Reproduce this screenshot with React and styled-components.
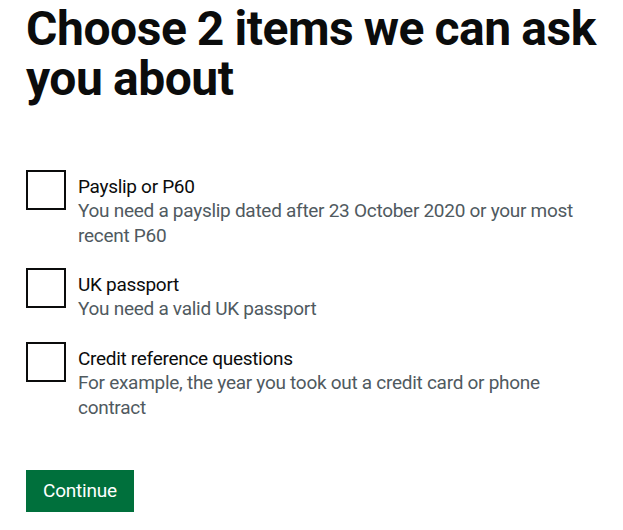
import React from "react";
import styled, { createGlobalStyle } from "styled-components";

const Global = createGlobalStyle`
  html, body { margin: 0; padding: 0; background: #ffffff; }
  body { font-family: Roboto, "Liberation Sans", Arial, sans-serif; color: #0b0c0c; }
  * { box-sizing: border-box; }
`;

const Page = styled.main`
  padding: 4px 10px 0 26px;
`;

const Fieldset = styled.fieldset`
  margin: 0;
  padding: 0;
  border: 0;
  min-width: 0;
`;

const Legend = styled.legend`
  padding: 0;
  margin: 0 0 66px 0;
`;

const Heading = styled.h1`
  margin: 0;
  font-family: Roboto, "Liberation Sans", Arial, sans-serif;
  font-weight: 700;
  font-size: 48px;
  line-height: 50px;
  letter-spacing: -0.45px;
  word-spacing: -1px;
  color: #0b0c0c;
`;

const Checkboxes = styled.div`
  display: flex;
  flex-direction: column;
`;

const Item = styled.div`
  display: grid;
  grid-template-columns: 40px 1fr;
  column-gap: 12px;
  min-height: 40px;
  margin-bottom: ${(p) => p.$gap}px;
`;

const Box = styled.input.attrs({ type: "checkbox" })`
  appearance: none;
  margin: 0;
  width: 40px;
  height: 40px;
  border: 2px solid #0b0c0c;
  background: #ffffff;
  grid-row: 1 / span 2;
`;

const Label = styled.label`
  display: block;
  padding-top: 5px;
  font-size: 19px;
  line-height: 23px;
  letter-spacing: -0.3px;
  color: #0b0c0c;
`;

const Hint = styled.div`
  grid-column: 2;
  font-size: 19px;
  line-height: 25px;
  letter-spacing: -0.28px;
  color: #505a5f;
  max-width: 510px;
`;

const Button = styled.button`
  margin-top: ${(p) => p.$top}px;
  font-family: Roboto, "Liberation Sans", Arial, sans-serif;
  font-size: 19px;
  line-height: 19px;
  letter-spacing: -0.2px;
  color: #ffffff;
  background: #00703c;
  border: 0;
  border-radius: 0;
  box-shadow: 0 2px 0 #002d18;
  padding: 11px 0 12px 0;
  height: 42px;
  width: 108px;
  text-align: center;
  cursor: pointer;
`;

const items = [
  {
    id: "payslip",
    label: "Payslip or P60",
    hint: "You need a payslip dated after 23 October 2020 or your most recent P60",
    gap: 20,
  },
  {
    id: "passport",
    label: "UK passport",
    hint: "You need a valid UK passport",
    gap: 21,
  },
  {
    id: "credit",
    label: "Credit reference questions",
    hint: "For example, the year you took out a credit card or phone contract",
    gap: 0,
  },
];

export default function App() {
  return (
    <>
      <Global />
      <Page>
        <Fieldset>
          <Legend>
            <Heading>Choose 2 items we can ask you about</Heading>
          </Legend>
          <Checkboxes>
            {items.map((it) => (
              <Item key={it.id} $gap={it.gap}>
                <Box id={it.id} />
                <Label htmlFor={it.id}>{it.label}</Label>
                <Hint>{it.hint}</Hint>
              </Item>
            ))}
          </Checkboxes>
        </Fieldset>
        <Button $top={50}>Continue</Button>
      </Page>
    </>
  );
}
